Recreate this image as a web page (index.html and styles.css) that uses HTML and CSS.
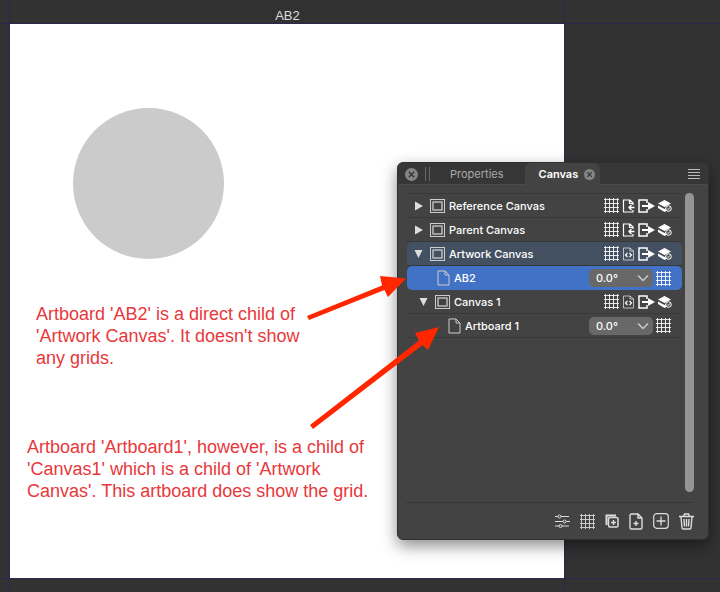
FILE: index.html
```html
<!DOCTYPE html>
<html lang="en">
<head>
    <meta charset="UTF-8">
    <title>Canvas Panel</title>
    <link rel="stylesheet" href="styles.css">
</head>
<body>
    <svg class="sprite" aria-hidden="true">
        <symbol id="grid" viewBox="0 0 15 15">
            <path d="M1.500 0v15M5.500 0v15M9.500 0v15M13.500 0v15M0 1.500h15M0 5.500h15M0 9.500h15M0 13.500h15" fill="none" stroke="currentColor" stroke-opacity=".85"/>
        </symbol>
        <symbol id="canvas" viewBox="0 0 15 14">
            <rect x=".5" y=".5" width="14" height="13" fill="none" stroke="currentColor"/>
            <rect x="3" y="3" width="9" height="8" fill="none" stroke="currentColor" stroke-width="1.3"/>
        </symbol>
        <symbol id="page" viewBox="0 0 13 16">
            <path d="M1 1h7l4 4v10H1zM8 1v4h4" fill="none" stroke="currentColor"/>
        </symbol>
        <symbol id="doc-in" viewBox="0 0 13 14">
            <path d="M11 6V4L8 1H1.500v12H11v-2M7.500 1v3.500H11" fill="none" stroke="currentColor" stroke-width="1.200"/>
            <path d="M12.500 8.500H7.500M9.500 6L7 8.500 9.500 11" fill="none" stroke="currentColor" stroke-width="1.400"/>
        </symbol>
        <symbol id="doc-code" viewBox="0 0 13 14">
            <path d="M1.500 1H8l3.500 3v9h-10zM8 1v3h3.500" fill="none" stroke="currentColor" stroke-width=".8" opacity=".8"/>
            <path d="M5.500 6L3.500 8l2 2M7.500 6l2 2-2 2" fill="none" stroke="currentColor" stroke-width="1.2"/>
        </symbol>
        <symbol id="export" viewBox="0 0 17 14">
            <path d="M9 4V1H1v12h8v-3" fill="none" stroke="currentColor" stroke-width="1.500"/>
            <path d="M4 6h6V3l7 4-7 4V8H4z" fill="currentColor"/>
        </symbol>
        <symbol id="layers" viewBox="0 0 14 14">
            <path d="M6.500 1l6.500 3.500L6.500 8 0 4.500z" fill="currentColor"/>
            <path d="M0 6.500L6.500 10 9 8.500 8.500 12l-2 1L0 9z" fill="currentColor"/>
            <circle cx="10.500" cy="9.500" r="2.800" fill="#555" stroke="currentColor"/>
            <path d="M9.300 9.500l1 1 1.500-2" fill="none" stroke="currentColor" stroke-width=".8"/>
        </symbol>
        <symbol id="closed" viewBox="0 0 10 10"><path d="M1 .5l8 4.500-8 4.500z" fill="currentColor"/></symbol>
        <symbol id="open" viewBox="0 0 10 10"><path d="M.5 1h8L4.500 9z" fill="currentColor"/></symbol>
        <symbol id="close" viewBox="0 0 13 13">
            <circle cx="6.500" cy="6.500" r="6.500" fill="#858585"/>
            <path d="M3.800 3.800l5.400 5.400M9.200 3.800L3.800 9.200" stroke="#333" stroke-width="1.3"/>
        </symbol>
        <symbol id="chevron" viewBox="0 0 12 8">
            <path d="M1 1.500l5 5 5-5" fill="none" stroke="currentColor" stroke-width="1.5"/>
        </symbol>
    </svg>

    <main class="workspace">
        <div class="artboard-title">AB2</div>
        <section class="artboard">
            <div class="circle"></div>
            <p class="note note-direct">Artboard 'AB2' is a direct child of<br>'Artwork Canvas'. It doesn't show<br>any grids.</p>
            <p class="note note-nested">Artboard 'Artboard1', however, is a child of<br>'Canvas1' which is a child of 'Artwork<br>Canvas'. This artboard does show the grid.</p>
        </section>
        <div class="guide guide-left"></div>
        <div class="guide guide-right"></div>
        <div class="guide guide-top"></div>
        <div class="guide guide-bottom"></div>

        <aside class="panel">
            <header class="tabs">
                <button class="panel-close" aria-label="Close panel"><svg width="13" height="13"><use href="#close"/></svg></button>
                <span class="grip"></span>
                <button class="tab">Properties</button>
                <div class="tab active">
                    <button class="tab-name">Canvas</button>
                    <button aria-label="Close Canvas"><svg width="11" height="11"><use href="#close"/></svg></button>
                </div>
                <button class="menu" aria-label="Panel menu">
                    <svg width="12" height="12"><path d="M0 1.500h12M0 4.500h12M0 7.500h12M0 10.500h12" stroke="currentColor"/></svg>
                </button>
            </header>

            <div class="content">
                <ul class="tree">
                    <li class="row">
                        <button aria-label="Expand Reference Canvas"><svg width="10" height="10"><use href="#closed"/></svg></button>
                        <svg class="kind" width="15" height="14"><use href="#canvas"/></svg>
                        <span class="name">Reference Canvas</span>
                        <span class="actions">
                            <button aria-label="Grid"><svg width="15" height="15"><use href="#grid"/></svg></button>
                            <button aria-label="Placement"><svg width="13" height="14"><use href="#doc-in"/></svg></button>
                            <button aria-label="Export"><svg width="17" height="14"><use href="#export"/></svg></button>
                            <button aria-label="Layers"><svg width="14" height="14"><use href="#layers"/></svg></button>
                        </span>
                    </li>
                    <li class="row">
                        <button aria-label="Expand Parent Canvas"><svg width="10" height="10"><use href="#closed"/></svg></button>
                        <svg class="kind" width="15" height="14"><use href="#canvas"/></svg>
                        <span class="name">Parent Canvas</span>
                        <span class="actions">
                            <button aria-label="Grid"><svg width="15" height="15"><use href="#grid"/></svg></button>
                            <button aria-label="Placement"><svg width="13" height="14"><use href="#doc-in"/></svg></button>
                            <button aria-label="Export"><svg width="17" height="14"><use href="#export"/></svg></button>
                            <button aria-label="Layers"><svg width="14" height="14"><use href="#layers"/></svg></button>
                        </span>
                    </li>
                    <li class="row current">
                        <button aria-label="Collapse Artwork Canvas"><svg width="10" height="10"><use href="#open"/></svg></button>
                        <svg class="kind" width="15" height="14"><use href="#canvas"/></svg>
                        <span class="name">Artwork Canvas</span>
                        <span class="actions">
                            <button aria-label="Grid"><svg width="15" height="15"><use href="#grid"/></svg></button>
                            <button aria-label="Code"><svg width="13" height="14"><use href="#doc-code"/></svg></button>
                            <button aria-label="Export"><svg width="17" height="14"><use href="#export"/></svg></button>
                            <button aria-label="Layers"><svg width="14" height="14"><use href="#layers"/></svg></button>
                        </span>
                    </li>
                    <li class="row artboard-row selected">
                        <svg class="kind" width="13" height="16"><use href="#page"/></svg>
                        <span class="name">AB2</span>
                        <span class="actions">
                            <span class="angle">
                                <select aria-label="AB2 angle"><option>0.0°</option></select>
                                <svg width="12" height="8"><use href="#chevron"/></svg>
                            </span>
                            <button aria-label="Grid"><svg width="15" height="15"><use href="#grid"/></svg></button>
                        </span>
                    </li>
                    <li class="row nested">
                        <button aria-label="Collapse Canvas 1"><svg width="10" height="10"><use href="#open"/></svg></button>
                        <svg class="kind" width="15" height="14"><use href="#canvas"/></svg>
                        <span class="name">Canvas 1</span>
                        <span class="actions">
                            <button aria-label="Grid"><svg width="15" height="15"><use href="#grid"/></svg></button>
                            <button aria-label="Code"><svg width="13" height="14"><use href="#doc-code"/></svg></button>
                            <button aria-label="Export"><svg width="17" height="14"><use href="#export"/></svg></button>
                            <button aria-label="Layers"><svg width="14" height="14"><use href="#layers"/></svg></button>
                        </span>
                    </li>
                    <li class="row artboard-row deep">
                        <svg class="kind" width="13" height="16"><use href="#page"/></svg>
                        <span class="name">Artboard 1</span>
                        <span class="actions">
                            <span class="angle">
                                <select aria-label="Artboard 1 angle"><option>0.0°</option></select>
                                <svg width="12" height="8"><use href="#chevron"/></svg>
                            </span>
                            <button aria-label="Grid"><svg width="15" height="15"><use href="#grid"/></svg></button>
                        </span>
                    </li>
                </ul>
                <div class="scrollbar"></div>
            </div>

            <footer class="tools">
                <button aria-label="Options">
                    <svg width="15" height="14" fill="none" stroke="currentColor"><path d="M0 2.500h3M6 2.500h8M0 7.500h8M11 7.500h4M0 12h4M7 12h7"/><circle cx="4.500" cy="2.500" r="1.500"/><circle cx="9.500" cy="7.500" r="1.500"/><circle cx="5.500" cy="12" r="1.500"/></svg>
                </button>
                <button aria-label="Show grid"><svg width="15" height="15"><use href="#grid"/></svg></button>
                <button aria-label="Add canvas">
                    <svg width="14" height="14" fill="none" stroke="currentColor"><path d="M1.500 11V1.500H11" stroke-width="2"/><rect x="3.500" y="3.500" width="9.500" height="9.500" rx="1.500" stroke-width="1.500"/><path d="M8.500 6v5M6 8.500h5" stroke-width="1.500"/></svg>
                </button>
                <button aria-label="Add artboard">
                    <svg width="14" height="17" fill="none" stroke="currentColor" stroke-width="1.400"><path d="M9 1H2.500Q1 1 1 2.500v12Q1 16 2.500 16h9q1.500 0 1.500-1.500V5L9 1v4h4"/><path d="M7 8v5M4.500 10.500h5"/></svg>
                </button>
                <button aria-label="Add">
                    <svg width="16" height="16" fill="none" stroke="currentColor"><rect x=".7" y=".7" width="14.600" height="14.600" rx="3" stroke-width="1.200"/><path d="M8 3.500v9M3.500 8h9" stroke-width="1.300"/></svg>
                </button>
                <button aria-label="Delete">
                    <svg width="15" height="17" fill="none" stroke="currentColor" stroke-width="1.400"><path d="M0 3.500h15M4.500 3.500L5.500 1h4l1 2.500M2 4l1 10.500Q3 16 4.500 16h6q1.500 0 1.500-1.500L13 4M5 6l.5 7.500M7.500 6v7.500M10 6l-.5 7.500"/></svg>
                </button>
            </footer>
        </aside>

        <svg class="arrow arrow-direct" width="98" height="44" viewBox="0 0 98 44" fill="#ff2600">
            <path d="M0 41L75 10.500 73 1 99 3.500 81 22 77.500 15 2 45z"/>
        </svg>
        <svg class="arrow arrow-nested" width="130" height="104" viewBox="0 0 130 104" fill="#ff2600">
            <path d="M1 99L110 14.500 106 7 130 1 119 24 113.500 19 4 103z"/>
        </svg>
    </main>
</body>
</html>
```

FILE: styles.css
```css
* {
    box-sizing: border-box;
}

body {
    margin: 0;
    background: #323232;
    font-family: Inter, "Liberation Sans", sans-serif;
    font-size: 11px;
    color: #fff;
}

button {
    display: flex;
    align-items: center;
    padding: 0;
    border: 0;
    background: none;
    color: inherit;
    font: inherit;
}

svg {
    display: block;
    flex-shrink: 0;
}

.sprite {
    position: absolute;
    width: 0;
    height: 0;
}

.workspace {
    position: relative;
    display: flex;
    flex-direction: column;
    min-height: 100vh;
    padding: 0 155px 14px 10px;
    overflow: hidden;
}

.artboard-title {
    height: 24px;
    padding-top: 8px;
    font: 13px/16px "Liberation Sans", Arial, sans-serif;
    color: #ddd;
    text-align: center;
}

.artboard {
    position: relative;
    flex: 1;
    background: #fff;
}

.circle {
    position: absolute;
    left: 63px;
    top: 84px;
    width: 151px;
    height: 151px;
    border-radius: 50%;
    background: #cbcbcb;
}

.note {
    position: absolute;
    margin: 0;
    font: 18px/22px "Liberation Sans", Arial, sans-serif;
    color: #e8383b;
    white-space: nowrap;
}

.note-direct {
    left: 26px;
    top: 279px;
}

.note-nested {
    left: 17px;
    top: 412px;
}

.guide {
    position: absolute;
    background: #29294e;
}

.guide-left,
.guide-right {
    top: 0;
    bottom: 0;
    width: 1px;
}

.guide-left {
    left: 9px;
}

.guide-right {
    right: 155px;
}

.guide-top,
.guide-bottom {
    left: 0;
    right: 0;
    height: 1px;
}

.guide-top {
    top: 23px;
}

.guide-bottom {
    bottom: 13px;
}

/* floating panel */
.panel {
    position: absolute;
    top: 162px;
    right: 11px;
    width: 312px;
    border: 1px solid #303030;
    border-radius: 6px;
    background: #434343;
    box-shadow: 0 6px 16px rgba(0, 0, 0, 0.45);
    overflow: hidden;
}

.tabs {
    display: flex;
    align-items: center;
    height: 22px;
    padding: 0 8px 0 7px;
    background: #363636;
    box-shadow: inset 0 -1px #4b4b4b;
    color: #aaa;
}

.grip {
    width: 5px;
    height: 14px;
    margin: 0 20px 0 7px;
    border: solid #666;
    border-width: 0 1px;
}

.tab {
    font-size: 11px;
    font-weight: 400;
}

.tab.active {
    display: flex;
    align-items: center;
    gap: 6px;
    height: 22px;
    margin-left: 21px;
    padding: 0 5px 0 14px;
    border-radius: 6px 6px 0 0;
    background: #434343;
    color: #fff;
}

.tab-name {
    font-weight: 600;
}

.menu {
    margin-left: auto;
    color: #bbb;
}

.content {
    display: flex;
    gap: 3px;
    padding: 8px 14px 10px 9px;
}

.tree {
    flex: 1;
    margin: 0;
    padding: 0;
    border-top: 1px solid #383838;
    list-style: none;
}

.row {
    display: flex;
    align-items: center;
    height: 24px;
    padding: 0 10px 0 7px;
    border-bottom: 1px solid #383838;
}

.kind {
    color: #ccc;
}

.row > button {
    margin-right: 6px;
    color: #ddd;
}

.name {
    margin-left: 4px;
    font-weight: 500;
}

.nested {
    padding-left: 12px;
}

.artboard-row {
    padding-right: 11px;
    padding-left: 30px;
}

.artboard-row.deep {
    padding-left: 41px;
}

.current {
    border-radius: 5px 5px 0 0;
    background: #435061;
}

.selected {
    border-radius: 5px;
    border-bottom: 0;
    background: #4272c6;
}

.actions {
    display: flex;
    align-items: center;
    gap: 3px;
    margin-left: auto;
}

.angle {
    display: grid;
    align-items: center;
}

.angle select,
.angle svg {
    grid-area: 1 / 1;
}

.angle select {
    width: 64px;
    height: 18px;
    padding: 0 7px;
    border: 0;
    border-radius: 5px;
    appearance: none;
    background: #686868;
    color: #fff;
    font: inherit;
    font-weight: 500;
}

.angle svg {
    justify-self: end;
    margin-right: 4px;
    color: #ccc;
    pointer-events: none;
}

.scrollbar {
    width: 9px;
    height: 299px;
    border-radius: 5px;
    background: #959595;
}

.tools {
    display: flex;
    align-items: center;
    justify-content: flex-end;
    gap: 10px;
    height: 37px;
    margin: 0 14px 0 8px;
    border-top: 1px solid #363636;
    color: #ddd;
}

/* callout arrows over the panel */
.arrow {
    position: absolute;
    overflow: visible;
}

.arrow-direct {
    right: 315px;
    top: 275px;
}

.arrow-nested {
    right: 281px;
    top: 326px;
}
```
